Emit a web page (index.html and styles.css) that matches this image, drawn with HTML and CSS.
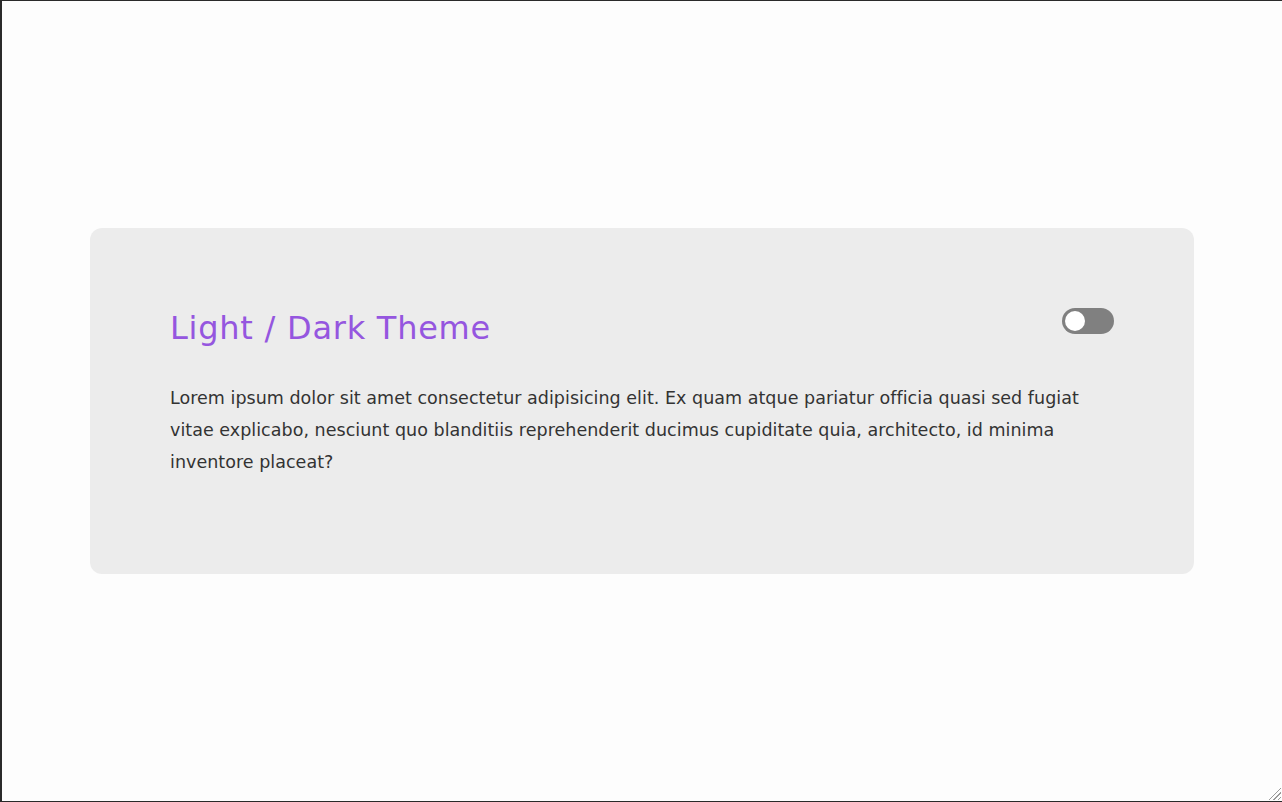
FILE: index.html
```html
<!DOCTYPE html>
<html lang="en">
<head>
<meta charset="utf-8">
<title>Light / Dark Theme</title>
<link rel="stylesheet" href="styles.css">
</head>
<body>
<div class="frame">
  <section class="card">
    <div class="card-header">
      <h2 class="card-title">Light / Dark Theme</h2>
      <label class="switch">
        <input type="checkbox" class="switch-input">
        <span class="switch-track"><span class="switch-knob"></span></span>
      </label>
    </div>
    <p class="card-text">Lorem ipsum dolor sit amet consectetur adipisicing elit. Ex quam atque pariatur officia quasi sed fugiat vitae explicabo, nesciunt quo blanditiis reprehenderit ducimus cupiditate quia, architecto, id minima inventore placeat?</p>
  </section>
</div>
</body>
</html>
```
FILE: styles.css
```css
html, body {
  margin: 0;
  padding: 0;
  background: #fdfdfd;
}

.frame {
  position: relative;
  box-sizing: border-box;
  width: 1282px;
  height: 802px;
  border-top: 1px solid #2a2a2a;
  border-bottom: 1px solid #2a2a2a;
  border-left: 2px solid #2a2a2a;
  display: flex;
  align-items: center;
  justify-content: center;
  overflow: hidden;
  font-family: "DejaVu Sans", "Liberation Sans", sans-serif;
}

.frame::after {
  content: "";
  position: absolute;
  right: 1px;
  bottom: 1px;
  width: 13px;
  height: 13px;
  background: linear-gradient(135deg,
    transparent 0 50%, #9a9a9a 50% 56%, transparent 56% 68%,
    #9a9a9a 68% 74%, transparent 74% 86%, #9a9a9a 86% 92%, transparent 92%);
}

.card {
  box-sizing: border-box;
  width: 1104px;
  padding: 80px;
  background: #ececec;
  border-radius: 12px;
}

.card-header {
  display: flex;
  justify-content: space-between;
  align-items: flex-start;
}

.card-title {
  margin: 0;
  font-size: 32px;
  line-height: 40px;
  font-weight: 400;
  letter-spacing: 0.75px;
  color: #9556df;
}

.switch {
  position: relative;
  display: block;
  width: 52px;
  height: 26px;
  cursor: pointer;
}

.switch-input {
  position: absolute;
  opacity: 0;
  width: 0;
  height: 0;
  margin: 0;
}

.switch-track {
  position: absolute;
  inset: 0;
  background: #808080;
  border-radius: 13px;
}

.switch-knob {
  position: absolute;
  top: 3px;
  left: 3px;
  width: 20px;
  height: 20px;
  border-radius: 50%;
  background: #ffffff;
}

.card-text {
  margin: 34px 0 16px;
  font-size: 17.5px;
  line-height: 32px;
  letter-spacing: 0.03px;
  color: #333333;
}
```
